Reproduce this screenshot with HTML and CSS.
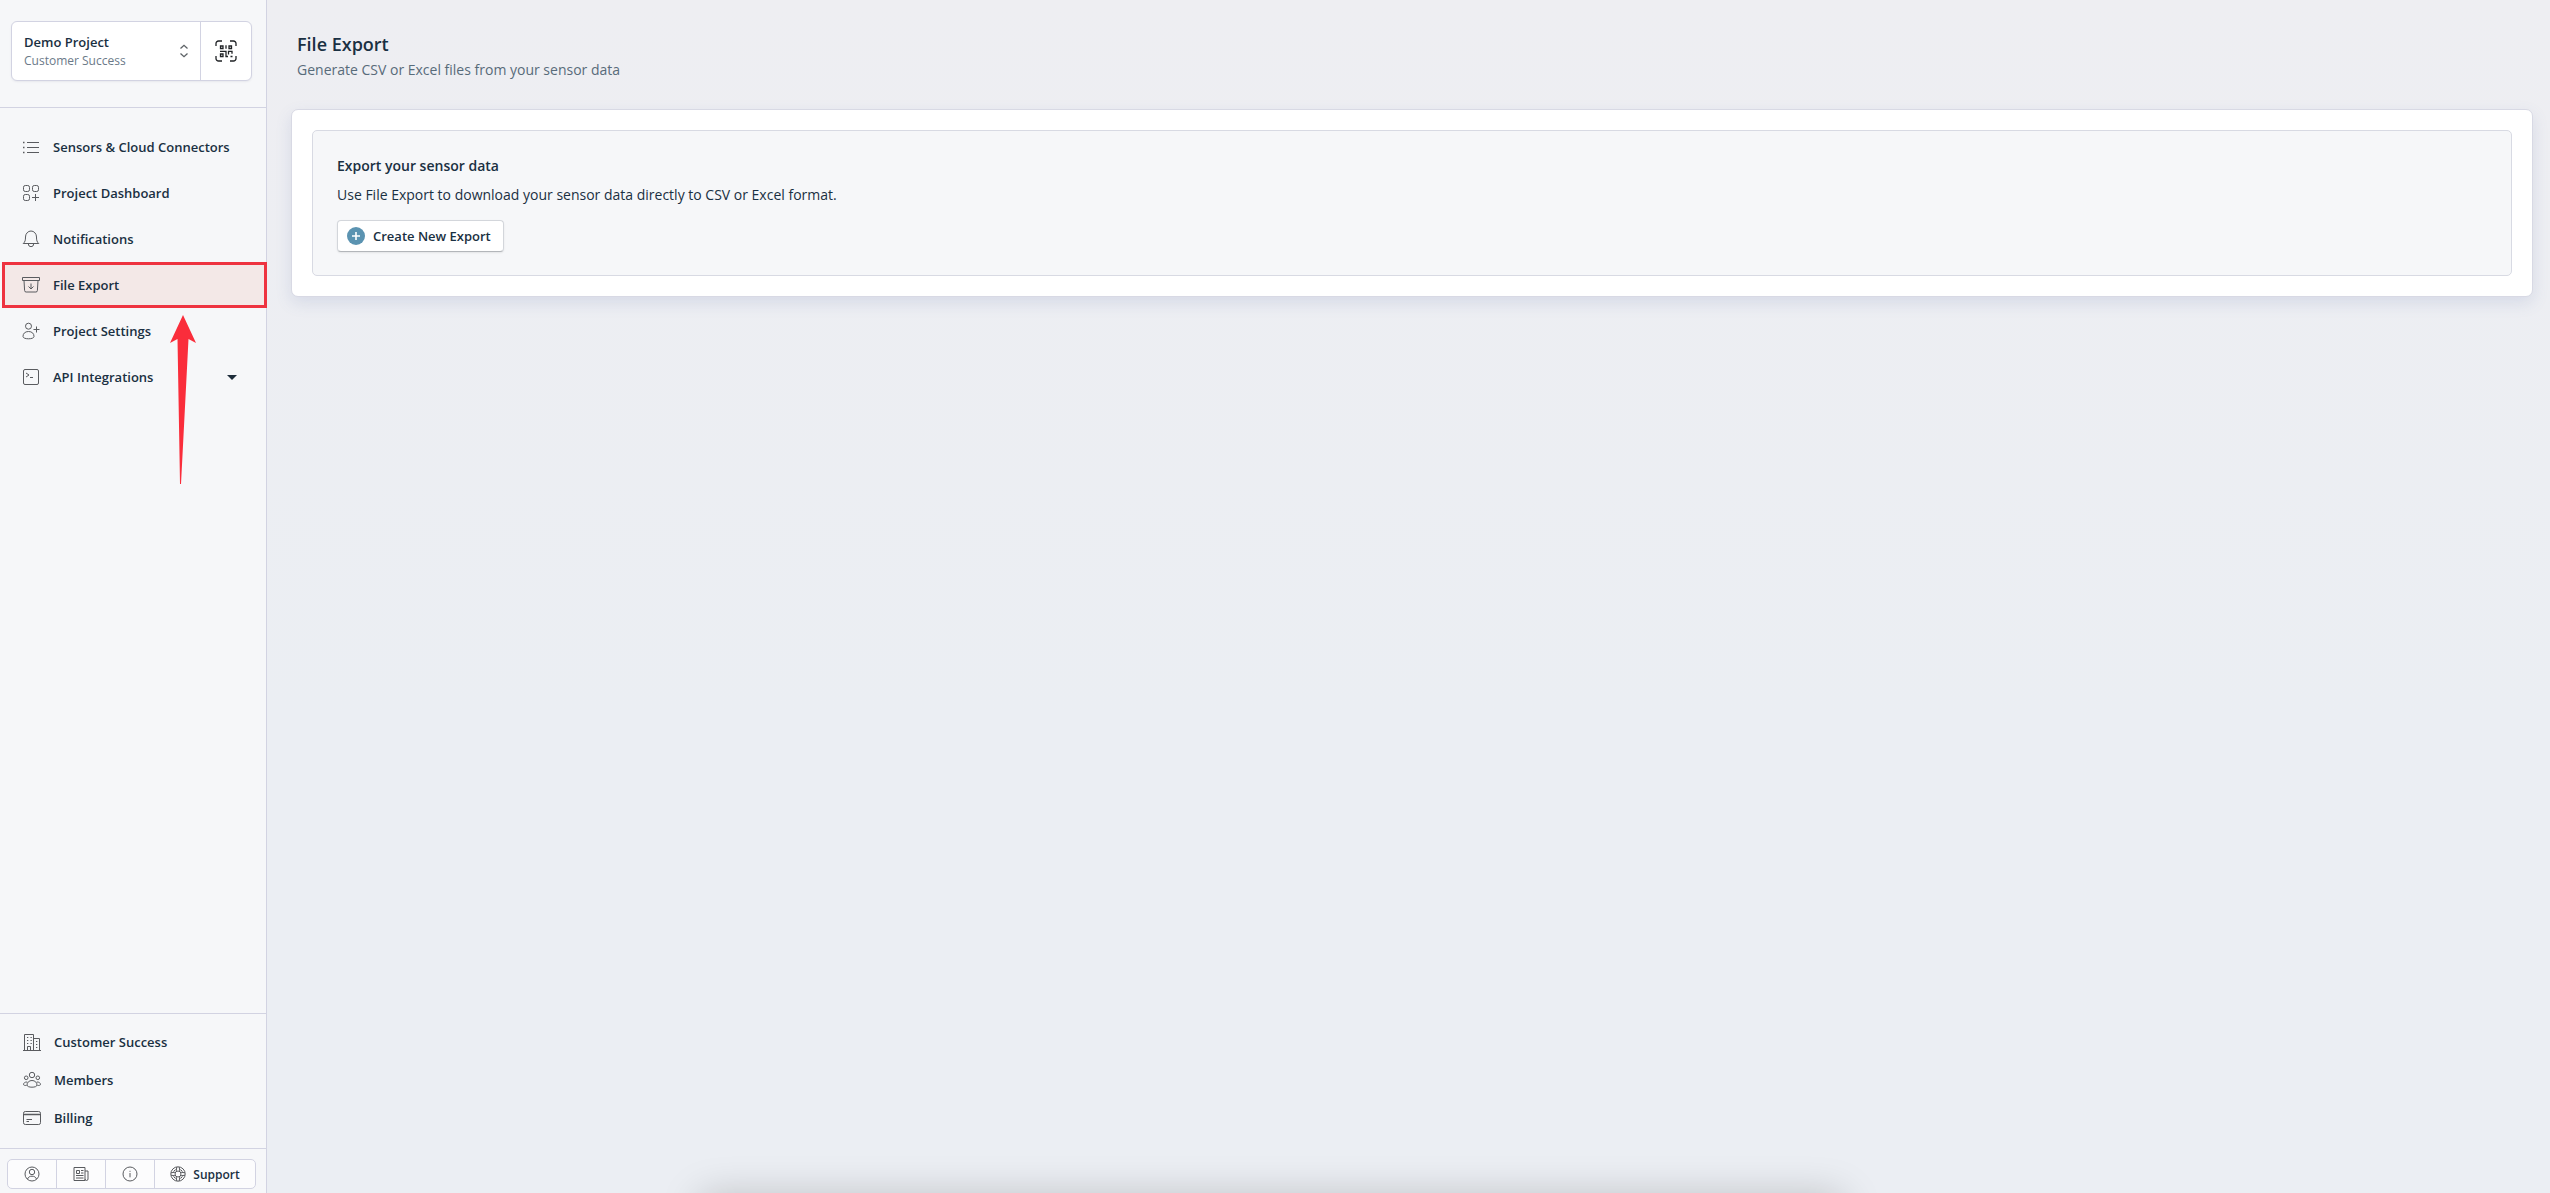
FILE: index.html
```html
<!DOCTYPE html>
<html lang="en">
<head>
    <meta charset="UTF-8">
    <meta name="viewport" content="width=device-width, initial-scale=1.0">
    <title>File Export</title>
    <link rel="stylesheet" href="styles.css">
</head>
<body>
    <aside class="sidebar">
        <div class="project-area">
            <div class="project-picker">
                <button class="project-select" type="button">
                    <span class="project-text">
                        <span class="project-name">Demo Project</span>
                        <span class="project-org">Customer Success</span>
                    </span>
                    <svg class="chevrons" viewBox="0 0 10 14"><path d="M1.500 4.500L5 1.300l3.500 3.200M1.500 9.500L5 12.700l3.500-3.200"/></svg>
                </button>
                <button class="qr-button" type="button" aria-label="Scan QR code">
                    <svg class="qr-icon" viewBox="0 0 22 22">
                        <path d="M1 6V3.500A2.500 2.500 0 0 1 3.500 1H7M15 1h3.500A2.500 2.500 0 0 1 21 3.500V6M21 16v2.500a2.500 2.500 0 0 1-2.500 2.500H15M7 21H3.500A2.500 2.500 0 0 1 1 18.500V16"/>
                        <path d="M5.500 6h2.500v2.500H5.500zM14 6h2.500v2.500H14zM5.500 14h2.500v2.500H5.500zM11 5.200v3.500M5 11.300h6v5.200h2M13.500 14.500v-3.200h3.500v2.500M15.500 16.500h2"/>
                    </svg>
                </button>
            </div>
        </div>

        <nav class="main-nav">
            <a class="nav-item" href="#">
                <svg class="icon" viewBox="0 0 18 18"><path d="M5 4.500h12M5 9.500h12M5 14.500h12"/><path d="M1 4.500h1.500M1 9.500h1.500M1 14.500h1.500" stroke-width="1.500"/></svg>
                Sensors &amp; Cloud Connectors
            </a>
            <a class="nav-item" href="#">
                <svg class="icon" viewBox="0 0 18 18"><rect x="1.500" y="1.500" width="6" height="6" rx="1.800"/><rect x="10.500" y="1.500" width="6" height="6" rx="1.800"/><rect x="1.500" y="10.500" width="6" height="6" rx="1.800"/><path d="M13.500 10v7M10 13.500h7"/></svg>
                Project Dashboard
            </a>
            <a class="nav-item" href="#">
                <svg class="icon" viewBox="0 0 18 18"><path d="M1.200 13.500c1.900-1.500 2.300-3.300 2.300-6.500a5.500 6 0 0 1 11 0c0 3.200.4 5 2.300 6.500zM6.300 13.800a2.700 2.900 0 0 0 5.400 0"/></svg>
                Notifications
            </a>
            <a class="nav-item active" href="#">
                <svg class="icon" viewBox="0 0 18 18"><path d="M.5 1.500h17v3H.5zM2 4.500l.6 10a1.500 1.500 0 0 0 1.500 1.500h9.800a1.500 1.500 0 0 0 1.500-1.500L16 4.500M9 7.500v5.500M6.500 10.500L9 13l2.500-2.500"/></svg>
                File Export
            </a>
            <a class="nav-item" href="#">
                <svg class="icon" viewBox="0 0 18 18"><circle cx="6.500" cy="4.200" r="3"/><path d="M1 14.500c0-3 2-5 5.500-5s5.500 2 5.500 5c0 1.500-2.500 2.300-5.500 2.300S1 16 1 14.500zM14.500 4.500v6M11.500 7.500h6"/></svg>
                Project Settings
            </a>
            <a class="nav-item" href="#">
                <svg class="icon" viewBox="0 0 18 18"><rect x="1.500" y="1.500" width="15" height="15" rx="1.500"/><path d="M4 5l3 2-3 2M8 9.500h3"/></svg>
                API Integrations
                <svg class="caret" viewBox="0 0 10 5"><path d="M0 0h10L5 5z"/></svg>
            </a>
            <svg class="arrow" viewBox="0 0 28 170"><path d="M14 0L27 28l-7.500-4L12 169h-1L8.500 24 1 28z"/></svg>
        </nav>

        <nav class="org-nav">
            <a class="org-item" href="#">
                <svg class="icon" viewBox="0 0 18 18"><path d="M0 17.500h18M1.500 17V1.500h9V17M10.500 5.500h6V17M4.500 17v-3.500h3V17"/><path d="M4 4.500h1.300M7.500 4.500h1.300M4 7.500h1.300M7.500 7.500h1.300M4 10.500h1.300M7.500 10.500h1.300M13 8.500h1.300M13 11.500h1.300M13 14.500h1.300"/></svg>
                Customer Success
            </a>
            <a class="org-item" href="#">
                <svg class="icon" viewBox="0 0 18 18"><circle cx="9" cy="4" r="2.700"/><circle cx="3.200" cy="6.800" r="1.800"/><circle cx="14.800" cy="6.800" r="1.800"/><path d="M4 14c0-2.500 2-4.500 5-4.500s5 2 5 4.500c0 1.500-2.300 2.200-5 2.200S4 15.500 4 14zM4.200 11C2 10.800.5 12 .5 13.500c0 .7 1.200 1 3 1M13.800 11c2.200-.2 3.700 1 3.700 2.500 0 .7-1.200 1-3 1"/></svg>
                Members
            </a>
            <a class="org-item" href="#">
                <svg class="icon" viewBox="0 0 18 18"><rect x=".5" y="2.500" width="17" height="13" rx="1.800"/><path d="M.5 5.500h17" stroke-width="1.500"/><path d="M3.500 10.500h5.500M3.500 12.500h2.500"/></svg>
                Billing
            </a>
        </nav>

        <div class="footer">
            <div class="toolbar">
                <button class="tool" type="button" aria-label="Account">
                    <svg class="tool-icon" viewBox="0 0 16 16"><circle cx="8" cy="8" r="7"/><circle cx="8" cy="6" r="2.700"/><path d="M3.500 13c.8-2 2.300-2.800 4.500-2.800s3.700.8 4.500 2.800"/></svg>
                </button>
                <button class="tool" type="button" aria-label="News">
                    <svg class="tool-icon" viewBox="0 0 16 16"><path d="M1 1.500h11v13H1zM12 5h3v8a1.500 1.500 0 0 1-3 0M3.500 4.500h3v3h-3zM8 4.500h2.500M8 7h2.500M3 9.500h7.500M3 12h7.500"/></svg>
                </button>
                <button class="tool" type="button" aria-label="Information">
                    <svg class="tool-icon" viewBox="0 0 16 16"><circle cx="8" cy="8" r="7"/><path d="M8 7v4.300M8 4.800v1"/></svg>
                </button>
                <button class="tool support" type="button">
                    <svg class="tool-icon" viewBox="0 0 16 16"><circle cx="8" cy="8" r="7.200"/><circle cx="8" cy="8" r="3"/><path d="M6.800 1l-.6 4M9.200 1l.6 4M6.800 15l-.6-4M9.200 15l.6-4M1 6.800l4-.6M1 9.200l4 .6M15 6.800l-4-.6M15 9.200l-4 .6M3.500 5.500l2-2M10.500 3.500l2 2M3.500 10.500l2 2M12.500 10.500l-2 2"/></svg>
                    Support
                </button>
            </div>
        </div>
    </aside>

    <main class="content">
        <header class="page-header">
            <h1>File Export</h1>
            <p>Generate CSV or Excel files from your sensor data</p>
        </header>
        <section class="card">
            <div class="panel">
                <h2>Export your sensor data</h2>
                <p>Use File Export to download your sensor data directly to CSV or Excel format.</p>
                <button class="create-button" type="button">
                    <svg class="plus-icon" viewBox="0 0 18 18"><circle cx="9" cy="9" r="9"/><path d="M9 5v8M5 9h8"/></svg>
                    Create New Export
                </button>
            </div>
        </section>
        <div class="bottom-shadow"></div>
    </main>
</body>
</html>
```
FILE: styles.css
```css
* {
    box-sizing: border-box;
}
body {
    font-family: "Open Sans", "Noto Sans", sans-serif;
    display: flex;
    min-height: 100vh;
    margin: 0;
    color: #1a3042;
    background: linear-gradient(#eeeef2, #ebeef3 60%);
}
h1, h2, p {
    margin: 0;
}
button {
    font-family: inherit;
    color: inherit;
    cursor: pointer;
}
svg {
    flex: none;
    fill: none;
}

/* sidebar */
.sidebar {
    width: 267px;
    flex: none;
    display: flex;
    flex-direction: column;
    background-color: #f6f7f9;
    border-right: 1px solid #d2d3e2;
}
.project-area {
    padding: 21px 14px 26px 11px;
    border-bottom: 1px solid #d2d3e2;
}
.project-picker {
    display: flex;
    height: 60px;
    background-color: white;
    border: 1px solid #d2d3e2;
    border-radius: 6px;
    box-shadow: 0 1px 2px rgba(60, 60, 100, 0.08);
}
.project-select {
    flex: 1;
    display: flex;
    justify-content: space-between;
    align-items: center;
    padding: 0 11px 0 12px;
    text-align: left;
    background: none;
    border: 0;
}
.project-name {
    display: block;
    font-size: 13px;
    font-weight: 600;
    line-height: 19px;
}
.project-org {
    display: block;
    font-size: 12px;
    line-height: 18px;
    color: #6b7a89;
}
.chevrons {
    width: 10px;
    height: 14px;
    stroke: #5d6266;
    stroke-width: 1.3;
}
.qr-button {
    width: 51px;
    padding: 0;
    display: flex;
    justify-content: center;
    align-items: center;
    background: none;
    border: 0;
    border-left: 1px solid #d2d3e2;
}
.qr-icon {
    width: 22px;
    height: 22px;
    stroke: #1f2225;
    stroke-width: 1.3;
}
.main-nav {
    position: relative;
    padding: 16px 0 0 2px;
}
.nav-item, .org-item {
    display: flex;
    align-items: center;
    gap: 13px;
    font-size: 13px;
    font-weight: 600;
    color: #1a3042;
    text-decoration: none;
}
.nav-item {
    height: 46px;
    padding: 0 29px 0 20px;
}
.nav-item.active {
    padding: 0 26px 0 17px;
    margin-right: -1px;
    background-color: #f3e8e7;
    border: 3px solid #ee3340;
}
.icon {
    width: 18px;
    height: 18px;
    stroke: #595b5f;
    stroke-width: 1;
}
.nav-item .caret {
    width: 10px;
    height: 5px;
    margin-left: auto;
    fill: #1d2c3a;
}
.arrow {
    position: absolute;
    left: 169px;
    top: 207px;
    width: 28px;
    height: 170px;
    fill: #fa2d3b;
}
.org-nav {
    margin-top: auto;
    padding: 9px 0 11px 23px;
    border-top: 1px solid #d2d3e2;
}
.org-item {
    height: 38px;
}
.footer {
    padding: 10px 10px 4px 7px;
    border-top: 1px solid #d2d3e2;
}
.toolbar {
    display: flex;
    height: 30px;
    background-color: #fcfcfd;
    border: 1px solid #d2d3e2;
    border-radius: 5px;
}
.tool {
    width: 49px;
    padding: 0;
    display: flex;
    justify-content: center;
    align-items: center;
    background: none;
    border: 0;
    border-right: 1px solid #d2d3e2;
}
.support {
    flex: 1;
    gap: 7px;
    font-size: 12px;
    font-weight: 600;
    border-right: 0;
}
.tool-icon {
    width: 16px;
    height: 16px;
    stroke: #595b5f;
}

/* page */
.content {
    flex: 1;
    position: relative;
    overflow: hidden;
    padding: 30px 17px 30px 24px;
}
.page-header {
    padding: 0 6px 27px;
}
h1 {
    font-size: 18px;
    font-weight: 600;
    line-height: 28px;
}
.page-header p {
    font-size: 14px;
    line-height: 24px;
    color: #586b7a;
}
.card {
    padding: 20px;
    background-color: white;
    border: 1px solid #d8d9e4;
    border-radius: 7px;
    box-shadow: 0 6px 16px rgba(90, 110, 170, 0.15);
}
.panel {
    padding: 24px 24px 23px;
    background-color: #f6f7f9;
    border: 1px solid #d8dae3;
    border-radius: 5px;
}
h2 {
    font-size: 14px;
    font-weight: 600;
    line-height: 22px;
}
.panel p {
    margin: 7px 0 14px;
    font-size: 14px;
    line-height: 22px;
}
.create-button {
    display: flex;
    align-items: center;
    gap: 8px;
    height: 32px;
    padding: 0 12px 0 9px;
    font-size: 13px;
    font-weight: 600;
    background-color: white;
    border: 1px solid #d3d6db;
    border-bottom-color: #b3b6ba;
    border-radius: 4px;
    box-shadow: 0 1px 2px rgba(0, 0, 0, 0.08);
}
.plus-icon {
    width: 18px;
    height: 18px;
    fill: #5b93b1;
}
.plus-icon path {
    stroke: white;
    stroke-width: 1.6;
}
.bottom-shadow {
    position: absolute;
    left: 19%;
    right: 31%;
    top: 100%;
    height: 40px;
    box-shadow: 0 4px 40px rgba(0, 0, 0, 0.22);
}
```
